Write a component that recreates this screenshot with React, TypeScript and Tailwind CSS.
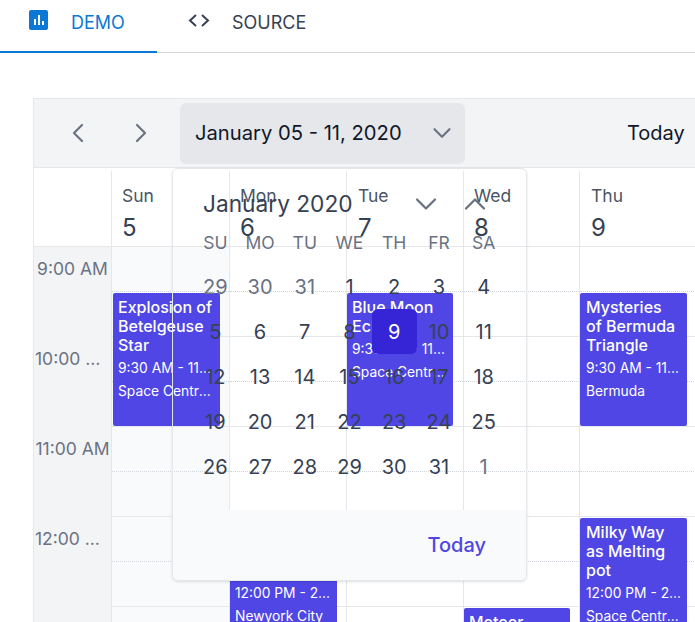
import React from 'react';
import { ChevronLeft, ChevronRight, ChevronDown, ChevronUp } from 'lucide-react';

const days = [
  { name: 'Sun', num: 5, w: 'w-[118px]', bg: 'bg-gray-50', pl: 'pl-[10px]' },
  { name: 'Mon', num: 6, w: 'w-[117px]', bg: 'bg-white', pl: 'pl-[10px]' },
  { name: 'Tue', num: 7, w: 'w-[117px]', bg: 'bg-white', pl: 'pl-[11px]' },
  { name: 'Wed', num: 8, w: 'w-[116px]', bg: 'bg-white', pl: 'pl-[10px]' },
  { name: 'Thu', num: 9, w: 'w-[117px]', bg: 'bg-white', pl: 'pl-[11px]' },
];

const times = ['9:00 AM', '10:00 AM', '11:00 AM', '12:00 PM', '1:00 PM'];

interface Ev {
  day: number;
  top: number;
  height: number;
  title: string;
  time: string;
  place: string;
}

const events: Ev[] = [
  { day: 0, top: 46, height: 133, title: 'Explosion of Betelgeuse Star', time: '9:30 AM - 11:00 AM', place: 'Space Centre USA' },
  { day: 2, top: 46, height: 133, title: 'Blue Moon Eclipse', time: '9:30 AM - 11:00 AM', place: 'Space Centre USA' },
  { day: 4, top: 46, height: 133, title: 'Mysteries of Bermuda Triangle', time: '9:30 AM - 11:00 AM', place: 'Bermuda' },
  { day: 1, top: 271, height: 178, title: 'Sky Gazing over the City Lights', time: '12:00 PM - 2:00 PM', place: 'Newyork City' },
  { day: 4, top: 271, height: 178, title: 'Milky Way as Melting pot', time: '12:00 PM - 2:00 PM', place: 'Space Centre USA' },
  { day: 3, top: 361, height: 133, title: 'Meteor Showers', time: '1:00 PM - 2:30 PM', place: 'Space Centre USA' },
];

const weeks = [
  [29, 30, 31, 1, 2, 3, 4],
  [5, 6, 7, 8, 9, 10, 11],
  [12, 13, 14, 15, 16, 17, 18],
  [19, 20, 21, 22, 23, 24, 25],
  [26, 27, 28, 29, 30, 31, 1],
];

const isOther = (w: number, d: number) => (w === 0 && d < 3) || (w === 4 && d === 6);

function EventCard({ ev }: { ev: Ev }) {
  const narrow = ev.day === 2 || ev.day === 3;
  return (
    <div
      className={`absolute bg-[#4f46e5] rounded-[2px] text-white pt-[5px] overflow-hidden ${ev.day === 4 ? 'pl-[6px] pr-[7px]' : 'pl-[5px] pr-[6px]'} ${narrow ? 'w-[106px]' : 'w-[107px]'}`}
      style={{ top: ev.top, height: ev.height, left: ev.day === 0 ? 1 : 0 }}
    >
      <div className="text-base font-medium leading-[19px]">{ev.title}</div>
      <div className={`text-[13.8px] leading-[17px] mt-[5px] truncate ${ev.day === 4 ? '-mr-[2px]' : ''}`}>{ev.time}</div>
      <div className="text-[13.8px] leading-[17px] mt-[6px] truncate">{ev.place}</div>
    </div>
  );
}

function DatePopup() {
  return (
    <div className="absolute left-[138px] top-[69px] w-[355px] h-[413px] border border-gray-200 rounded-md shadow-sm flex flex-col">
      <div className="flex items-center h-[69px] pl-[30px]">
        <span className="text-[22.7px] leading-8 w-[206px] text-[#374151]">January 2020</span>
        <ChevronDown size={36} strokeWidth={1.5} className="text-gray-500 -ml-[1px] shrink-0" />
        <ChevronUp size={36} strokeWidth={1.5} className="text-gray-500 ml-[13px] shrink-0" />
      </div>
      <div className="grid grid-cols-7 w-[313px] ml-[20px] -mt-[8px] h-[20px] items-center text-[17.5px] text-gray-500">
        {['SU', 'MO', 'TU', 'WE', 'TH', 'FR', 'SA'].map((d) => (
          <div key={d} className="text-center">{d}</div>
        ))}
      </div>
      <div className="grid grid-cols-7 w-[313px] ml-[20px] mt-[14px]">
        {weeks.map((week, w) =>
          week.map((d, i) => (
            <div key={`${w}-${i}`} className="h-[45px] flex items-center justify-center">
              {w === 1 && i === 4 ? (
                <span className="w-[45px] h-[45px] bg-[#3525d6] text-white rounded-md flex items-center justify-center text-xl">{d}</span>
              ) : (
                <span className={`text-xl ${isOther(w, i) ? 'text-gray-500' : 'text-gray-700'}`}>{d}</span>
              )}
            </div>
          ))
        )}
      </div>
      <div className="mt-auto h-[70px] bg-gray-50 rounded-b-md flex items-center justify-end pr-[40px]">
        <span className="text-xl font-medium text-[#4f46e5]">Today</span>
      </div>
    </div>
  );
}

export default function App() {
  return (
    <div className="w-[695px] h-[622px] overflow-hidden bg-white font-['Inter',sans-serif]">
      <div className="h-[53px] border-b border-gray-300 flex">
        <div className="w-[157px] h-[53px] border-b-2 border-[#0b78d6] flex items-start pl-[29px] text-[#0b78d6]">
          <div className="w-[19px] h-[20px] mt-[10px] bg-[#0b78d6] rounded-[2px] flex items-end justify-center gap-[2px] pb-[5px]">
            <span className="w-[2px] h-[6px] bg-white" />
            <span className="w-[2px] h-[10px] bg-white" />
            <span className="w-[2px] h-[4px] bg-white" />
          </div>
          <span className="ml-[23px] mt-[11px] text-lg leading-[24px]">DEMO</span>
        </div>
        <div className="flex items-start pl-[31px] text-gray-700">
          <svg width="22" height="13" viewBox="0 0 22 13" fill="none" stroke="currentColor" strokeWidth="2" className="mt-[14px]">
            <path d="M8 1 L2 6.5 L8 12" />
            <path d="M14 1 L20 6.5 L14 12" />
          </svg>
          <span className="ml-[22px] mt-[11px] text-lg leading-[24px]">SOURCE</span>
        </div>
      </div>

      <div className="relative ml-[33px] mt-[45px] w-[670px] border-t border-l border-gray-200">
        <div className="h-[69px] bg-gray-100 border-b border-gray-200 flex items-center">
          <ChevronLeft size={32} strokeWidth={1.6} className="ml-[28px] text-gray-500 shrink-0" />
          <ChevronRight size={32} strokeWidth={1.6} className="ml-[31px] text-gray-500 shrink-0" />
          <div className="ml-[23px] w-[285px] h-[61px] bg-gray-200 rounded-md flex items-center justify-between pl-[15px] pr-[8px] text-[20.2px] text-gray-900 shrink-0">
            <span>January 05 - 11, 2020</span>
            <ChevronDown size={30} strokeWidth={1.7} className="text-gray-500" />
          </div>
          <span className="ml-[162px] text-xl text-gray-900">Today</span>
        </div>

        <div className="flex h-[78px] pt-[3px]">
          <div className="w-[78px] border-r border-gray-200 shrink-0" />
          {days.map((d) => (
            <div key={d.name} className={`${d.w} ${d.pl} border-r border-gray-200 pt-[12px] shrink-0`}>
              <div className="text-[17.5px] leading-[26px] text-gray-600">{d.name}</div>
              <div className="text-2xl leading-[32px] mt-[3px] text-gray-700">{d.num}</div>
            </div>
          ))}
        </div>

        <div className="flex border-t border-gray-200">
          <div className="w-[78px] bg-gray-100 border-r border-gray-200 shrink-0">
            {times.map((t) => (
              <div key={t} className="h-[90px] text-[17.5px] text-gray-500 text-center px-[1px] pt-[10px]">
                <div className="truncate leading-6">{t}</div>
              </div>
            ))}
          </div>
          {days.map((d, i) => (
            <div key={d.name} className={`${d.w} ${d.bg} relative border-r border-gray-200 shrink-0`}>
              {times.map((t) => (
                <div key={t} className="h-[90px] border-b border-gray-200">
                  <div className="h-[45px] border-b border-dotted border-gray-300" />
                </div>
              ))}
              {events.filter((e) => e.day === i).map((e) => (
                <EventCard key={e.title} ev={e} />
              ))}
            </div>
          ))}
        </div>

        <DatePopup />
      </div>
    </div>
  );
}
